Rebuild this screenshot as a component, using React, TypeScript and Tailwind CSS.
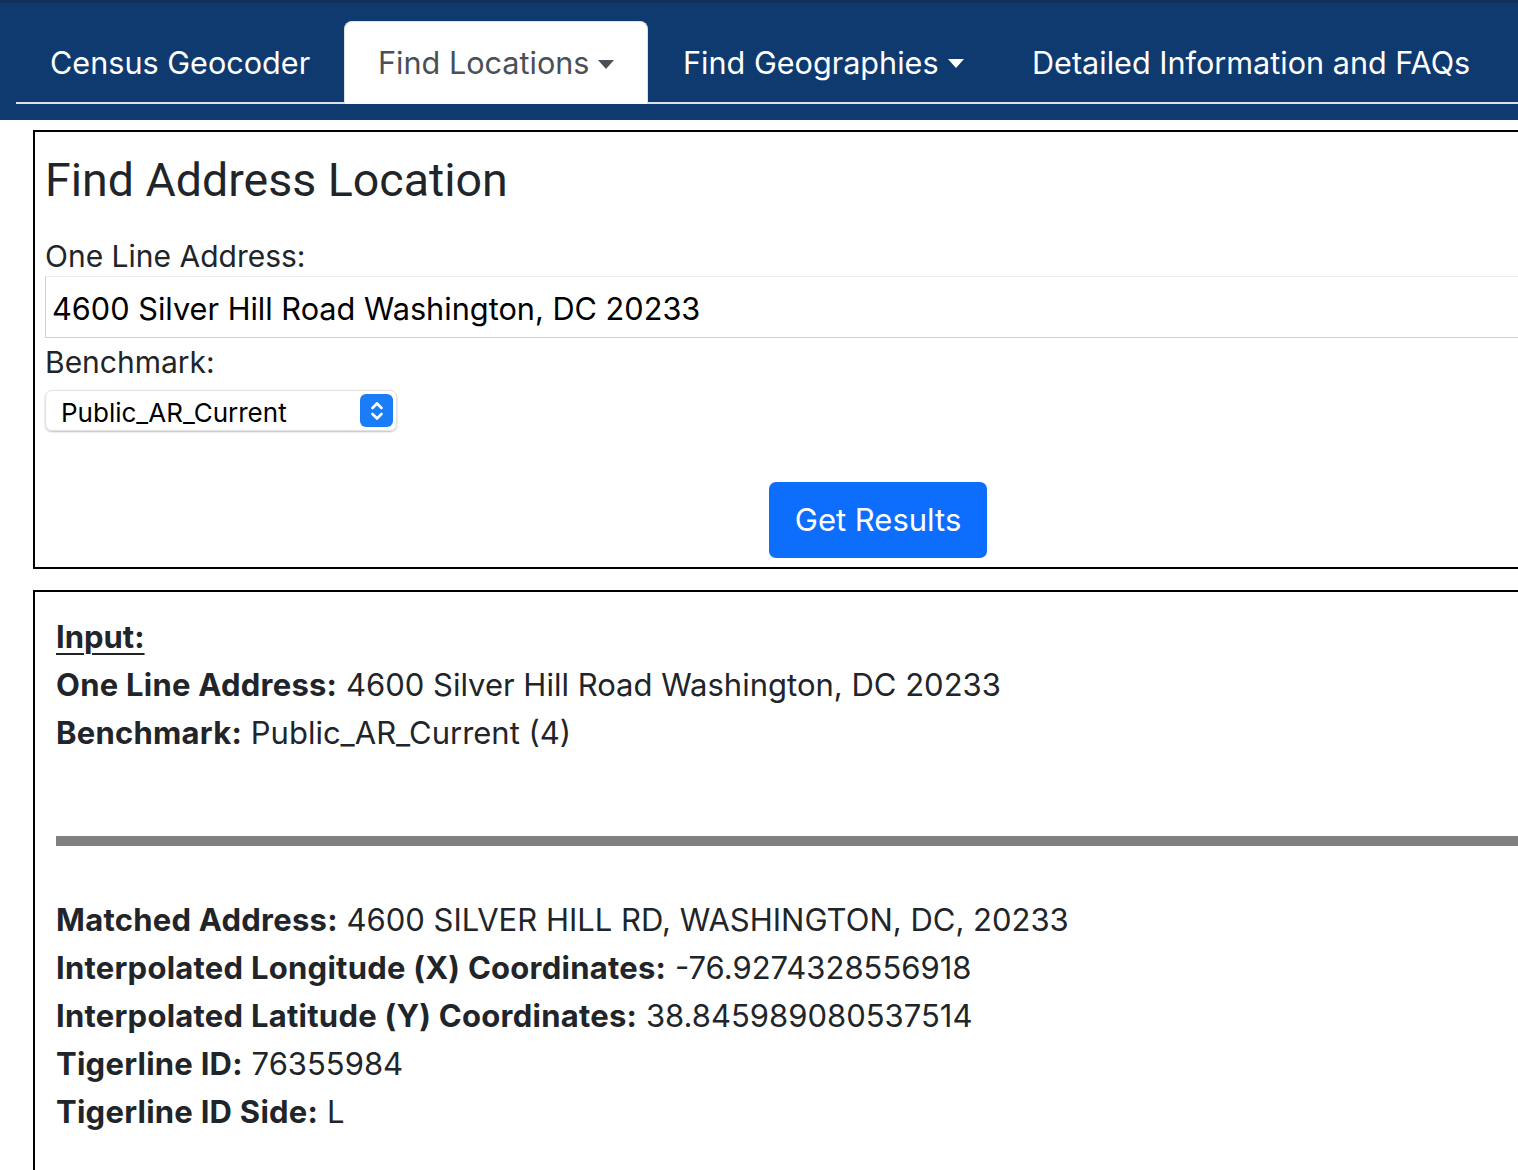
import React from "react";

function Caret() {
  return (
    <svg width="16" height="9" viewBox="0 0 16 9" className="ml-[9px] mt-[2px] shrink-0">
      <path d="M0 0 L16 0 L8 9 Z" fill="currentColor" />
    </svg>
  );
}

function Row({ label, value }: { label: string; value: string }) {
  return (
    <div className="leading-[48px] h-[48px] whitespace-nowrap">
      <span className="font-bold tracking-[0.25px]">{label}</span> {value}
    </div>
  );
}

export default function App() {
  return (
    <div className="w-[1518px] h-[1170px] overflow-hidden bg-white text-[#212529]" style={{ fontFamily: "Inter, 'Noto Sans', sans-serif" }}>
      <nav className="bg-[#0e3a70] h-[120px] border-t-[3px] border-[#13305a]">
        <div className="pt-[17px] ml-[16px] flex items-end border-b-2 border-[#dee2e6] h-[101px] text-[30.6px] whitespace-nowrap">
          <div className="w-[328px] h-[83px] flex items-center pl-[34px] text-white -mb-[2px]">Census Geocoder</div>
          <div className="w-[304px] h-[83px] -mb-[2px] flex items-center pl-[33px] bg-white text-[#495057] rounded-t-[8px] border border-b-0 border-[#dee2e6]">
            Find Locations
            <Caret />
          </div>
          <div className="w-[350px] h-[83px] flex items-center pl-[35px] text-white -mb-[2px]">
            Find Geographies
            <Caret />
          </div>
          <div className="h-[83px] flex items-center pl-[34px] text-white -mb-[2px]">Detailed Information and FAQs</div>
        </div>
      </nav>

      <div className="mt-[10px] ml-[33px] w-[1700px] border-2 border-black px-[10px] pt-[16px] pb-[9px]">
        <h2 className="text-[46.5px] leading-[64px] h-[64px] text-[#212529]" style={{ fontFamily: "Roboto, 'Liberation Sans', sans-serif" }}>Find Address Location</h2>
        <div className="mt-[24px] text-[30px] leading-[40px] h-[40px]">One Line Address:</div>
        <div className="h-[62px] border border-[#d0d0d0] border-t-[#ececec] flex items-center pl-[6px] pt-[5px] text-[30.7px] text-black">
          4600 Silver Hill Road Washington, DC 20233
        </div>
        <div className="mt-[4px] text-[30px] leading-[40px] h-[40px]">Benchmark:</div>
        <div className="mt-[8px] w-[352px] h-[41px] rounded-[7px] border border-[#e2e2e2] shadow-[0_1px_2px_rgba(0,0,0,0.25)] flex items-center justify-between pl-[15px] pr-[3px] text-[26px] text-black">
          <span className="pt-[3px]">Public_AR_Current</span>
          <div className="w-[33px] h-[33px] rounded-[6px] bg-[#1a7cf7] flex items-center justify-center">
            <svg width="14" height="22" viewBox="0 0 14 22" fill="none" stroke="white" strokeWidth="2.6" strokeLinecap="round" strokeLinejoin="round">
              <path d="M2.5 8 L7 3.5 L11.5 8" />
              <path d="M2.5 14 L7 18.5 L11.5 14" />
            </svg>
          </div>
        </div>
        <div className="mt-[51px] ml-[724px] w-[218px] h-[76px] rounded-[7px] bg-[#0d6efd] text-white text-[31px] flex items-center justify-center">
          Get Results
        </div>
      </div>

      <div className="mt-[21px] ml-[33px] w-[1700px] h-[700px] border-2 border-black pl-[21px] pt-[21px]">
        <div className="leading-[48px] h-[48px] text-[31px] font-bold underline underline-offset-[5px] decoration-2">Input:</div>
        <div className="text-[31px]">
          <Row label="One Line Address:" value="4600 Silver Hill Road Washington, DC 20233" />
          <Row label="Benchmark:" value="Public_AR_Current (4)" />
        </div>
        <div className="mt-[79px] h-[10px] bg-[#808080]" />
        <div className="mt-[50px] text-[31px]">
          <Row label="Matched Address:" value="4600 SILVER HILL RD, WASHINGTON, DC, 20233" />
          <Row label="Interpolated Longitude (X) Coordinates:" value="-76.9274328556918" />
          <Row label="Interpolated Latitude (Y) Coordinates:" value="38.845989080537514" />
          <Row label="Tigerline ID:" value="76355984" />
          <Row label="Tigerline ID Side:" value="L" />
        </div>
      </div>
    </div>
  );
}
